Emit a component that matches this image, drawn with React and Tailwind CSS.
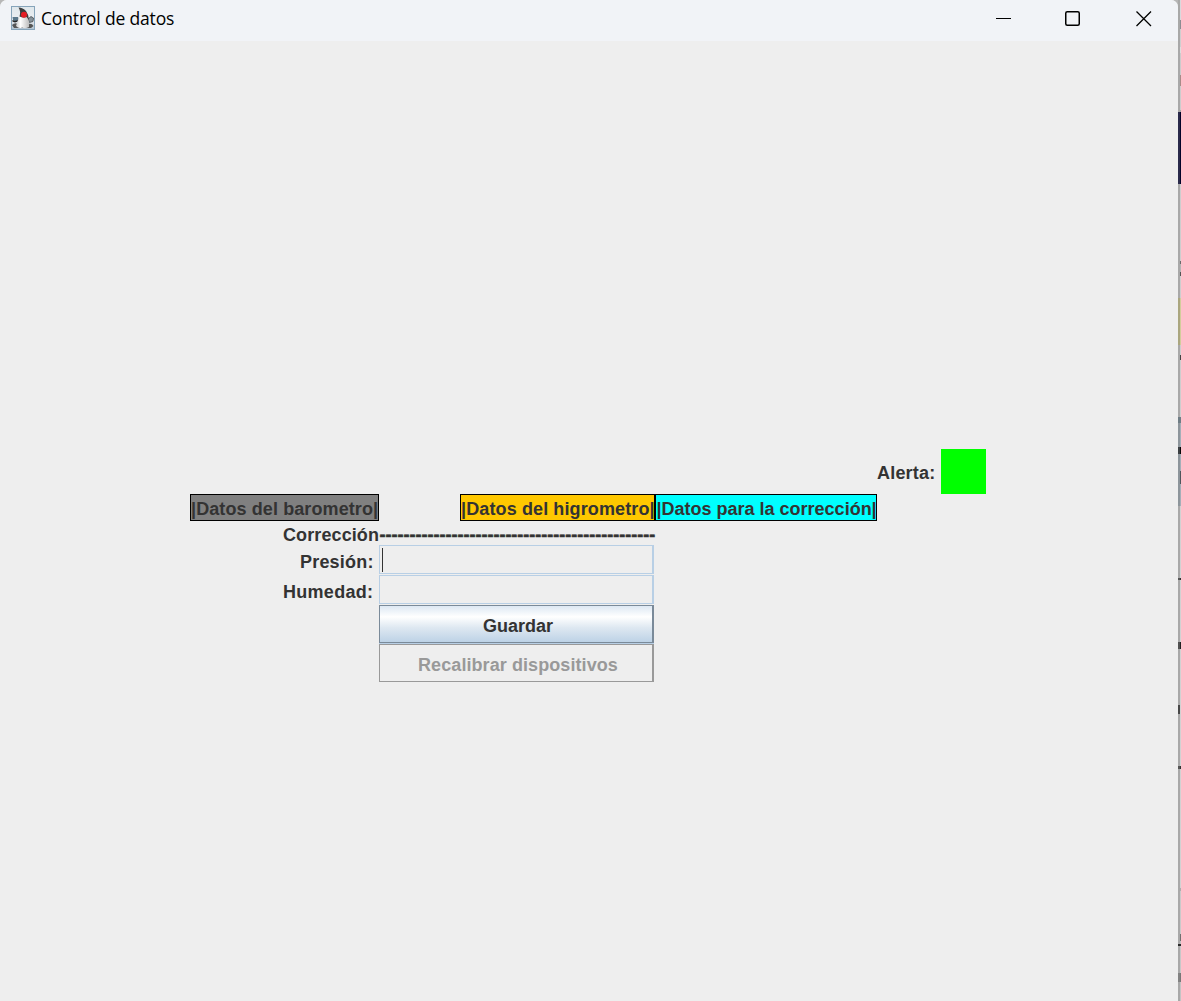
import React from "react";

const strip = [
  ["h-[20px]", "bg-[#d9d9dc]"], ["h-[9px]", "bg-[#8d8d92]"], ["h-[18px]", "bg-[#cfcfcf]"], ["h-[6px]", "bg-[#dedede]"],
  ["h-[22px]", "bg-[#cccccc]"], ["h-[11px]", "bg-[#a88b88]"], ["h-[24px]", "bg-[#cdcdcd]"], ["h-[2px]", "bg-[#a9a9a9]"],
  ["h-[72px]", "bg-[#030329]", "bg-[#2a2a4b]"], ["h-[77px]", "bg-[#cecece]"], ["h-[3px]", "bg-[#6b6b6b]"], ["h-[8px]", "bg-[#b5b5b5]"],
  ["h-[4px]", "bg-[#555555]"], ["h-[22px]", "bg-[#cecece]"], ["h-[47px]", "bg-[#d3cd9b]", "bg-[#aaa67f]"], ["h-[10px]", "bg-[#cecece]"],
  ["h-[5px]", "bg-[#444444]"], ["h-[57px]", "bg-[#cecece]"], ["h-[6px]", "bg-[#6f7d85]", "bg-[#6f7d85]"], ["h-[24px]", "bg-[#a4afb8]", "bg-[#8d959b]"],
  ["h-[7px]", "bg-[#080808]", "bg-[#3b3f42]"], ["h-[17px]", "bg-[#a4afb8]", "bg-[#8d959b]"], ["h-[13px]", "bg-[#4f565c]", "bg-[#8d959b]"], ["h-[22px]", "bg-[#a4afb8]", "bg-[#8d959b]"],
  ["h-[72px]", "bg-[#d2d2d2]"], ["h-[2px]", "bg-[#333333]", "bg-[#555555]"], ["h-[62px]", "bg-[#d2d2d2]"], ["h-[7px]", "bg-[#222222]", "bg-[#505050]"],
  ["h-[56px]", "bg-[#d2d2d2]"], ["h-[9px]", "bg-[#d2d2d2]", "bg-[#484848]"], ["h-[52px]", "bg-[#d2d2d2]"],
  ["h-[3px]", "bg-[#333333]", "bg-[#555555]"], ["h-[119px]", "bg-[#d2d2d2]"], ["h-[3px]", "bg-[#adadad]"],
  ["h-[43px]", "bg-[#cacaca]"], ["h-[7px]", "bg-[#707070]"], ["h-[3px]", "bg-[#c0c0c0]"], ["h-[2px]", "bg-[#292929]", "bg-[#292929]"],
  ["h-[27px]", "bg-[#c8c8c8]"], ["h-[9px]", "bg-[#777777]", "bg-[#828282]"], ["h-[19px]", "bg-[#c4c4c4]"],
];

function DukeIcon() {
  return (
    <svg width="24" height="24" viewBox="0 0 24 24">
      <defs>
        <linearGradient id="tile" x2="0" y2="1">
          <stop offset="0" stopColor="#dfe7ec" />
          <stop offset="0.6" stopColor="#eceff2" />
          <stop offset="1" stopColor="#aebfce" />
        </linearGradient>
        <linearGradient id="belly">
          <stop offset="0" stopColor="#c8c8c8" />
          <stop offset="0.35" stopColor="#fff" />
          <stop offset="1" stopColor="#bdbdbd" />
        </linearGradient>
      </defs>
      <rect x="0.5" y="0.5" width="23" height="23" fill="url(#tile)" stroke="#86a4ba" />
      <path d="M1 19 Q4 16 7 18 L17 18 Q21 17 22.5 20 L20 22 L3 22 Z" fill="#555555" />
      <path d="M1.5 11 L7 11 L8.5 15 L4 16 L2 14 Z" fill="#5b788b" />
      <path d="M1.5 14.5 Q4 17 8 14" fill="none" stroke="#252525" strokeWidth="1.5" />
      <path d="M17 13 L20 10.5 L22.5 12 L22 15.5 L18.5 16.5 Z" fill="#87929a" stroke="#454b50" strokeWidth="0.8" />
      <path d="M9 9 Q7 13 5 20 Q8 23 11 21.5 Q15 23 18 21 Q18.5 14 15.5 9 Z" fill="url(#belly)" />
      <path d="M7.5 1.5 Q12 1.5 15 5 Q18 9 18 14 L15.5 11 Q12 12 8.5 10.5 Q10 5 7.5 1.5 Z" fill="#3d3d3d" />
      <circle cx="13" cy="8.8" r="3" fill="#e51d24" />
    </svg>
  );
}

export default function App() {
  return (
    <div className="flex h-[1001px] w-[1181px] overflow-hidden bg-[#b7b7b7] font-['Liberation_Sans',Arial,sans-serif]">
      <div className="flex w-[1178px] shrink-0 flex-col overflow-hidden rounded-tl-[7px] rounded-tr-[7px] bg-[#eeeeee]">
        <header className="flex h-[41px] shrink-0 items-start bg-[#f1f3f7]">
          <div className="ml-[11px] mt-[6px]"><DukeIcon /></div>
          <h1 className="ml-[6px] mt-[6px] whitespace-nowrap font-['Open_Sans','Noto_Sans',sans-serif] text-[17.5px] font-normal leading-[24px] tracking-[-0.16px] text-black">Control de datos</h1>
          <svg className="ml-auto mr-[26px] mt-[11px]" width="156" height="16" viewBox="0 0 156 16" fill="none" stroke="#000">
            <path d="M0 7.5H15" strokeWidth="1" />
            <rect x="69.75" y="0.75" width="13.5" height="13.5" rx="1.5" strokeWidth="1.5" />
            <path d="M140.5 0.5L155 15M155 0.5L140.5 15" strokeWidth="1.3" />
          </svg>
        </header>

        <main className="ml-[190px] mt-[408px] grid grid-cols-[189px_276px_222px_64px_45px] grid-rows-[45px_27px_24px_30px_30px_39px_39px] whitespace-pre text-[18px] font-bold leading-[20px] text-[#333333]">
          <div className="col-start-4 pt-[14px] tracking-[0.2px]">Alerta: </div>
          <div className="col-start-5 bg-[#00ff00]" />

          <div className="col-start-1 row-start-2 border border-black bg-[#808080] pt-[4px] tracking-[0.1px]">|Datos del barometro|</div>
          <div className="col-start-2 row-start-2 w-[195px] justify-self-end border border-black bg-[#ffc800] pt-[4px] tracking-[0.12px]">|Datos del higrometro|</div>
          <div className="col-start-3 row-start-2 border border-black bg-[#00ffff] pl-[0.5px] pt-[4px]">|Datos para la corrección|</div>

          <div className="col-start-1 row-start-3 w-[96px] justify-self-end pt-[4px] tracking-[0.1px]">Corrección</div>
          <div className="col-start-2 row-start-3 pl-[0.5px] pt-[4px] [-webkit-text-stroke:0.5px_#333333]">----------------------------------------------</div>

          <label className="col-start-1 row-start-4 w-[79px] justify-self-end pt-[7px] tracking-[0.2px]">Presión:</label>
          <div className="col-start-2 row-start-4 h-[29px] w-[275px] border border-r-2 border-[#b8cfe5] pl-[2px] pt-[2px]">
            <div className="h-[24px] w-px bg-[#333333]" />
          </div>
          <label className="col-start-1 row-start-5 w-[96px] justify-self-end pt-[7px] tracking-[0.28px]">Humedad:</label>
          <div className="col-start-2 row-start-5 h-[29px] w-[275px] border border-r-2 border-[#b8cfe5]" />

          <button className="col-start-2 row-start-6 flex h-[38px] w-[275px] items-center justify-center border border-r-2 border-[#7a8a99] bg-[linear-gradient(#dde8f3_0%,#ffffff_30%,#dee8f1_60%,#bdd2e6_100%)] pl-[4px] pt-[3px] shadow-[0_1px_0_#b8cfe5]">Guardar</button>
          <button className="col-start-2 row-start-7 flex h-[38px] w-[275px] items-center justify-center border border-r-2 border-[#999999] pl-[4px] pt-[3px] tracking-[0.08px] text-[#999999]">Recalibrar dispositivos</button>
        </main>
      </div>
      <aside className="flex w-[3px] shrink-0 flex-col">
        {strip.map(([height, color, edge = "bg-[#a8a8a8]"], i) => (
          <div key={i} className={`${height} flex shrink-0`}>
            <div className={`${edge} w-[2px]`} />
            <div className={`${color} w-px`} />
          </div>
        ))}
      </aside>
    </div>
  );
}
